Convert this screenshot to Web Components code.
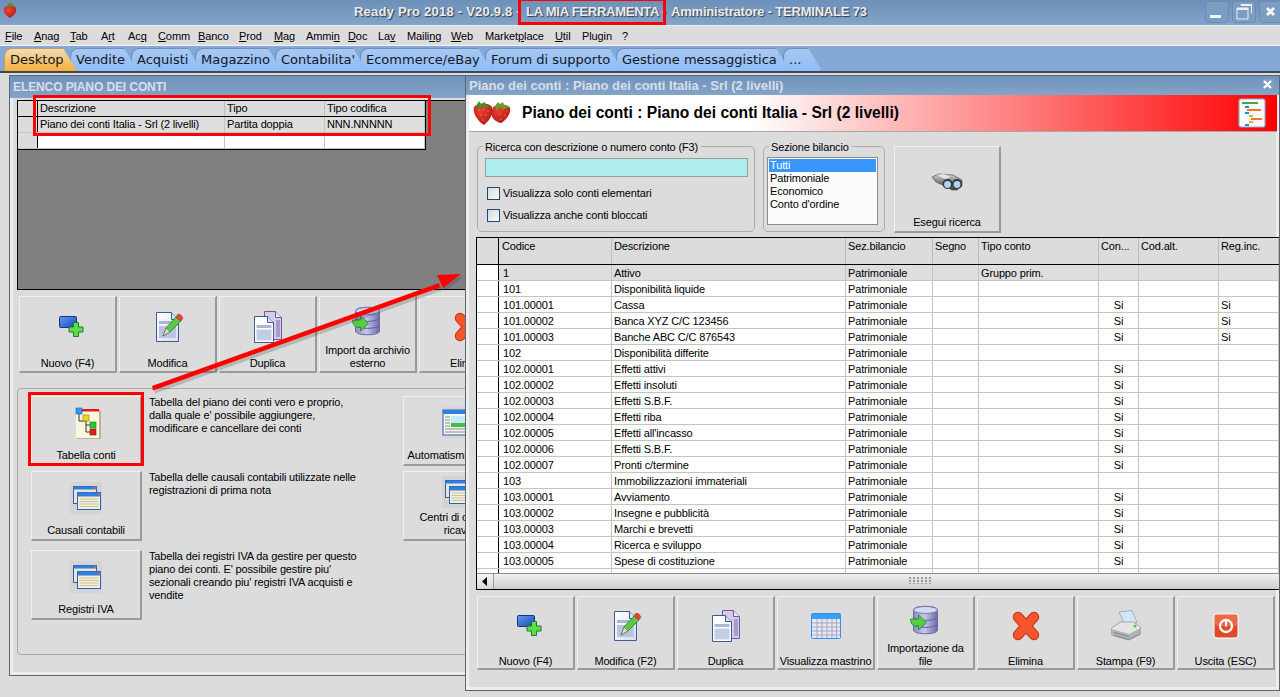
<!DOCTYPE html>
<html lang="it"><head><meta charset="utf-8"><title>Ready Pro</title>
<style>
html,body{margin:0;padding:0;height:697px;width:1280px;overflow:hidden;background:#dcdcdc}
body{display:flex;flex-direction:column;font:11px "Liberation Sans",sans-serif;color:#000;letter-spacing:-.15px}
</style></head><body>
<rp-titlebar></rp-titlebar>
<rp-menubar items="File:0|Anag:0|Tab:0|Art:1|Acq:2|Comm:0|Banco:0|Prod:0|Mag:0|Ammin:4|Doc:0|Lav:2|Mailing:5|Web:0|Marketplace:6|Util:0|Plugin:9|?:9"></rp-menubar>
<rp-tabs items="Desktop|Vendite|Acquisti|Magazzino|Contabilita'|Ecommerce/eBay|Forum di supporto|Gestione messaggistica|..."></rp-tabs>
<rp-desktop>
  <rp-window style="left:9px;top:2px;width:900px;height:601px" heading="ELENCO PIANO DEI CONTI" tall>
    <rp-left-content></rp-left-content>
  </rp-window>
  <rp-arrow style="left:0;top:0;width:480px;height:400px"></rp-arrow>
  <rp-window style="left:465px;top:2px;width:815px;height:616px" heading="Piano dei conti : Piano dei conti Italia - Srl (2 livelli)" closable>
    <rp-right-content></rp-right-content>
  </rp-window>
</rp-desktop>
<rp-callout style="left:518px;top:-2px;width:148px;height:27px"></rp-callout>
<rp-callout style="left:33px;top:95px;width:398px;height:41px"></rp-callout>
<rp-callout style="left:28px;top:392px;width:116px;height:74px"></rp-callout>
<script>
const I={};
I.new=`<defs><linearGradient id="a" x1="0" y1="0" x2="1" y2="1"><stop offset="0" stop-color="#5f9bf0"/><stop offset="1" stop-color="#1c46b8"/></linearGradient></defs>
<rect x="7.500" y="5.500" width="17" height="11" rx="1" fill="url(#a)" stroke="#17357f"/>
<path d="M21.500 11.500h5v4.500h4.500v5h-4.500v4.500h-5v-4.500h-4.500v-5h4.500z" fill="#5fdc4a" stroke="#1c7c24"/>`;
I.edit=`<defs><linearGradient id="a" x1="0" y1="0" x2="1" y2="1"><stop offset="0" stop-color="#fff"/><stop offset="1" stop-color="#d6dff0"/></linearGradient></defs>
<path d="M4.500 1.500h15l7 7v22h-22z" fill="url(#a)" stroke="#3f5b95"/><path d="M19.500 1.500v7h7" fill="#cfe2f8" stroke="#3f5b95"/>
<rect x="7" y="10" width="17" height="3" fill="#aab8d8"/><rect x="7" y="15" width="17" height="12" fill="#b8c4e2"/>
<path d="M11 25l3-8L24 6l5 4L18 21z" fill="#5cc84a" stroke="#2b7c2b" stroke-width=".8"/><path d="M11 25l3-8 4 4z" fill="#e9d9b8" stroke="#555" stroke-width=".5"/>
<path d="M24 6l2-3 3 1 2 3-2 3z" fill="#e8452c" stroke="#a52a1a" stroke-width=".5"/>`;
I.dup=`<path d="M12.500 .5h11l6 6v22h-17z" fill="#d7cbe8" stroke="#6a5a9c"/><path d="M23.500 .5v6h6" fill="#efe9f7" stroke="#6a5a9c"/><rect x="24" y="9" width="4" height="17" fill="#a999cc"/>
<path d="M2.500 5.500h13l6 6v20h-19z" fill="#fff" stroke="#3f5b95"/><path d="M15.500 5.500v6h6" fill="#cfe2f8" stroke="#3f5b95"/>
<rect x="4.500" y="14" width="15" height="3" fill="#aab8d8"/><rect x="4.500" y="18.500" width="15" height="11" fill="#c2cde6"/>`;
I.cal=`<rect x="1.500" y="3.500" width="29" height="25" rx="1" fill="#e8e6f2" stroke="#2b90f0"/><rect x="2" y="4" width="28" height="5" fill="#3ba0f4"/>
<path d="M2 13h28M2 17h28M2 21h28M2 25h28M7 9v19M12 9v19M17 9v19M22 9v19M26.500 9v19" stroke="#a9a7c4" fill="none"/>`;
I.db=`<defs><linearGradient id="a" x1="0" x2="1"><stop offset="0" stop-color="#8c8cc4"/><stop offset=".45" stop-color="#c6c6ec"/><stop offset="1" stop-color="#6c6ca8"/></linearGradient></defs>
<path d="M3.500 6c0-5 24-5 24 0v20c0 5-24 5-24 0z" fill="url(#a)" stroke="#6a6aa0"/><ellipse cx="15.500" cy="6" rx="12" ry="3.500" fill="#d7d7f4" stroke="#7a7ab0"/>
<path d="M3.500 13c2 4.500 22 4.500 24 0M3.500 20c2 4.500 22 4.500 24 0" fill="none" stroke="#5f5f98"/>
<path d="M.5 15h8v-4l8 7.500-8 7.500v-4h-3c-3 0-5-3-5-7z" fill="#55cc44" stroke="#23802a" stroke-width=".8"/>`;
I.del=`<path d="M8 7l16 18M24 7L8 25" fill="none" stroke="#c8361a" stroke-width="10.500" stroke-linecap="round"/><path d="M8 7l16 18M24 7L8 25" fill="none" stroke="#f4552c" stroke-width="8.500" stroke-linecap="round"/>`;
I.print=`<path d="M9 2l13-1.500 5 12L15 15z" fill="#cfe6fb" stroke="#8a9aa8" stroke-width=".7"/>
<path d="M1.500 18l9-6h13l7 5v7L19 30 1.500 25z" fill="#e4e6e6" stroke="#8a8f92" stroke-width=".7"/><path d="M1.500 19l17.500 5 11.500-6v6L19 30 1.500 25z" fill="#aeb4b6"/>
<path d="M4 25.500l15 4 11-5.500M4 22.500l15 4" stroke="#6e7578" fill="none" stroke-width=".7"/><circle cx="25" cy="16" r="1.500" fill="#4cc844"/>`;
I.power=`<rect x="4" y="4" width="24" height="24" rx="3" fill="#e04a28" stroke="#fff"/><rect x="5" y="5" width="22" height="11" rx="2" fill="#ec6a48"/>
<circle cx="16" cy="16" r="6" fill="none" stroke="#fff" stroke-width="2.300"/><rect x="15" y="10.500" width="2" height="6" fill="#fff"/>`;
I.list=`<rect x="0" y="0" width="32" height="32" fill="#d4d4d4"/><rect x="3.500" y="4.500" width="23" height="17" fill="#eae6d2" stroke="#2d5fb8"/><rect x="3.500" y="4.500" width="23" height="3" fill="#2f7fe0"/><circle cx="25" cy="6" r="1.200" fill="#f26030"/>
<rect x="7.500" y="10.500" width="23" height="17" fill="#f4efd8" stroke="#2d5fb8"/><rect x="7.500" y="10.500" width="23" height="4" fill="#2f7fe0"/><circle cx="29" cy="12.500" r="1.200" fill="#f26030"/>
<path d="M9.500 17h19M9.500 19.500h19M9.500 22h19M9.500 24.500h19" stroke="#c8c2a2"/>`;
I.auto=`<rect x="0" y="0" width="32" height="32" fill="#d6d6d6"/><rect x="1" y="3" width="30" height="25" fill="#f6f6ee" stroke="#2d5fb8"/><rect x="1" y="3" width="30" height="4" fill="#2f7fe0"/>
<rect x="9" y="9" width="21" height="7" fill="#c4ecf8"/><rect x="9" y="16" width="21" height="4" fill="#40c040"/><path d="M3 10h5M3 13h5M3 16h5M3 19h5M3 22h26M3 25h26" stroke="#888"/>`;
I.tree=`<rect x="7" y="3" width="24" height="29" fill="#b9b3a0"/><rect x="6" y="2" width="23" height="29" fill="#fbf6e0"/><rect x="11" y="2" width="18" height="2.500" fill="#e81818"/>
<path d="M9 7v7h7M16 14v11h6M16 18h6" fill="none" stroke="#333"/><rect x="6" y="1" width="6" height="6" fill="#2f9bee" stroke="#1560a8" stroke-width=".6"/>
<rect x="13" y="8" width="6" height="6" fill="#f0d820" stroke="#907c10" stroke-width=".6"/><rect x="20" y="15" width="6" height="6" fill="#22d024" stroke="#118018" stroke-width=".6"/><rect x="20" y="22" width="6" height="6" fill="#e02020" stroke="#901010" stroke-width=".6"/>`;
I.bino=`<defs><linearGradient id="a" x1="0" y1="0" x2="0" y2="1"><stop offset="0" stop-color="#d4d4d4"/><stop offset=".5" stop-color="#7c8084"/><stop offset="1" stop-color="#3c3f43"/></linearGradient></defs>
<path d="M1 11l7-3 14 1 9 5v6l-5 4-5 0-7-4-9-4z" fill="url(#a)" stroke="#404040" stroke-width=".6"/><path d="M6 9l7-1 7 3-6 2z" fill="#e4e4e4"/>
<circle cx="16.500" cy="18" r="5" fill="#34383c"/><circle cx="16.500" cy="18.500" r="3.400" fill="#b4d2f6"/><circle cx="26" cy="18" r="5" fill="#34383c"/><circle cx="26" cy="18.500" r="3.400" fill="#b4d2f6"/>`;
I.hdr=`<rect x="1" y="1" width="26" height="28" rx="2" fill="#f8fbfc" stroke="#8fb0c8" stroke-width="1.200"/><rect x="4" y="4" width="16" height="2" fill="#46a836"/><rect x="7" y="8" width="4" height="2" fill="#1a88e0"/><rect x="9" y="11" width="14" height="2" fill="#f47828"/><rect x="7" y="14" width="4" height="2" fill="#1a88e0"/><rect x="11" y="17" width="4" height="2" fill="#eab020"/><rect x="13" y="20" width="11" height="2" fill="#f47828"/><rect x="11" y="23" width="4" height="2" fill="#eab020"/><rect x="7" y="26" width="4" height="2" fill="#1a88e0"/>`;
const seeds=(a)=>a.map(([x,y])=>`<circle cx="${x}" cy="${y}" r=".6" fill="#f0b090"/>`).join('');
I.berries=`<defs><radialGradient id="r" cx=".4" cy=".35" r=".8"><stop offset="0" stop-color="#e8402c"/><stop offset=".7" stop-color="#c0201c"/><stop offset="1" stop-color="#8a1414"/></radialGradient></defs>
<path d="M20 6c6-4 15-3 17 1 1 6-4 12-9 15-6-1-10-6-10-10z" fill="url(#r)"/>
<path d="M1 6c3-4 14-5 18 0 2 7-3 14-8 18C6 21-1 13 1 6z" fill="url(#r)"/>
${seeds([[6,9],[11,8],[15,10],[8,14],[13,14],[10,19],[24,8],[30,8],[34,10],[27,13],[32,14],[28,18]])}
<path d="M3 5l3-5 2 3 4-2 1 3 5 1-5 2-4-1-4 2z" fill="#4e8a2c"/><path d="M22 5l3-4 2 2 3-2 1 3 6 2-6 2-4-1-4 2z" fill="#6f9a30"/>`;
I.app=`<defs><radialGradient id="r" cx=".4" cy=".35" r=".8"><stop offset="0" stop-color="#ee4a30"/><stop offset=".7" stop-color="#c42018"/><stop offset="1" stop-color="#901410"/></radialGradient></defs>
<path d="M1 7c2-3 10-3 12 0 1 5-3 8-6 10C4 15 0 12 1 7z" fill="url(#r)"/><path d="M4 5l1-3 2 1 2-2 1 3 3 1-3 1-3-1-3 1z" fill="#5a8a30"/>`;
const def=(n,c)=>customElements.define(n,c);
class Base extends HTMLElement{
  render(html){if(!this.shadowRoot)this.attachShadow({mode:'open'});this.shadowRoot.innerHTML=html}
}
def('rp-icon',class extends Base{connectedCallback(){const s=+(this.getAttribute('size')||32),n=this.getAttribute('name'),vb=this.getAttribute('vb')||'0 0 32 32';
  this.render(`<style>:host{display:block;width:${this.getAttribute('w')||s}px;height:${this.getAttribute('h')||s}px;flex:none}svg{display:block;width:100%;height:100%;overflow:visible}</style><svg viewBox="${vb}">${I[n]}</svg>`)}});
def('rp-titlebar',class extends Base{connectedCallback(){this.render(`<style>
:host{display:flex;flex:none;height:25px;border-bottom:1px solid #e8eef4;align-items:center;position:relative;background:linear-gradient(#6c90b8,#7c9ec4 70%,#82a4c8);font:bold 13px "Liberation Sans",sans-serif;color:#ececec}
.ic{position:absolute;left:3px;top:1px}
.t{display:flex;position:absolute;left:354px;top:4px;white-space:pre;text-shadow:1px 1px 1px #2c3c50}
.t span{display:block;flex:none}
.b{position:absolute;top:1px;width:22px;height:20px;border:1px solid #6a8cb0;border-radius:4px;background:#7c9dc2}
svg{position:absolute;left:0;top:0}
</style><rp-icon class="ic" name="app" size="18" vb="0 0 14 18" w="14" h="18"></rp-icon>
<div class="t"><span style="width:172px;letter-spacing:.22px">Ready Pro 2018 - V20.9.8 -</span><span style="width:145px;letter-spacing:-.25px">LA MIA FERRAMENTA -</span><span style="letter-spacing:-.2px">Amministratore - TERMINALE 73</span></div>
<div class="b" style="left:1205px"><svg width="22" height="20"><rect x="4" y="13" width="11" height="3" fill="#f4f4f4"/></svg></div>
<div class="b" style="left:1232px"><svg width="22" height="20"><path d="M7.500 2.500h11v9M4 6h11v11H4z" fill="none" stroke="#f0f0f0"/><path d="M4 6h11v2H4zM8 2h11v2H8z" fill="#f0f0f0"/></svg></div>
<div class="b" style="left:1259px;width:24px"><svg width="22" height="20"><path d="M7 6l7 7M14 6l-7 7" stroke="#f4f4f4" stroke-width="3"/></svg></div>`)}});
def('rp-menubar',class extends Base{connectedCallback(){const pos=[5,34,70,101,128,158,198,239,274,306,348,378,407,451,485,555,582,622];
  const it=this.getAttribute('items').split('|').map((s,i)=>{const [t,u]=[s.slice(0,s.lastIndexOf(':')),+s.slice(s.lastIndexOf(':')+1)];
    const h=t.length>u?t.slice(0,u)+'<u>'+t[u]+'</u>'+t.slice(u+1):t;
    const next=pos[i+1]||660;return `<span style="width:${next-pos[i]}px">${h}</span>`}).join('');
  this.render(`<style>:host{display:flex;flex:none;height:19px;padding-left:5px;align-items:center;background:#dcdcdc;border-bottom:1px solid #f4f4f4;font:11px "Liberation Sans",sans-serif;letter-spacing:-.1px}span{display:block;flex:none;white-space:pre}</style>${it}`)}});
def('rp-tabs',class extends Base{connectedCallback(){const w=[66,61,64,80,85,125,131,167,32];
  const it=this.getAttribute('items').split('|').map((t,i)=>`<div class="tab${i?'':' on'}" style="width:${w[i]}px;z-index:${20-i}"><i></i><span>${t}</span></div>`).join('');
  this.render(`<style>
:host{display:flex;flex:none;height:25px;padding-left:4px;align-items:flex-end;background:#84a8d8;border-bottom:2px solid #3c4854;box-sizing:content-box;font:13px "DejaVu Sans",sans-serif;letter-spacing:0;color:#101828;box-shadow:0 1px 0 #b0b0b0}
.tab{position:relative;height:23px;flex:none;box-sizing:border-box}
.tab span{position:relative;display:block;padding:4px 0 0 6px;white-space:pre}
.tab i{position:absolute;left:0;top:0;bottom:0;right:-7px;background:linear-gradient(#a8c8f0,#90bcf8);border:1px solid #6a90c4;border-bottom:0;border-radius:8px 14px 0 0;clip-path:polygon(0 0,calc(100% - 14px) 0,100% 100%,0 100%)}
.on i{background:linear-gradient(#eedcc0,#f4c470 50%,#f8b040);border-color:#d09a50;right:-7px}
</style>${it}`)}});
def('rp-desktop',class extends Base{connectedCallback(){this.render(`<style>:host{display:block;position:relative;flex:1;min-height:0;background:#dcdcdc;overflow:hidden}</style><slot></slot>`)}});
def('rp-window',class extends Base{connectedCallback(){const tall=this.hasAttribute('tall');
  this.render(`<style>
:host{display:flex;flex-direction:column;position:absolute;box-sizing:border-box;border:1px solid #5c6670;background:#dcdcdc;overflow:hidden;box-shadow:inset 0 0 0 3px #eeeeee}
.h{flex:none;height:${tall?22:19}px;margin:0;padding-left:3px;background:linear-gradient(#6e92bc,#84a4c8);font:bold ${tall?12:13}px/${tall?22:20}px "Liberation Sans",sans-serif;letter-spacing:${tall?-.1:0}px;color:#d8dfe8;position:relative;white-space:pre}
.x{position:absolute;right:5px;top:3px;width:12px;height:12px;background:#7e9ec4}
svg{display:block}
.b{flex:1;min-height:0;display:flex;flex-direction:column}
</style><div class="h">${this.getAttribute('heading')}${this.hasAttribute('closable')?'<div class="x"><svg width="12" height="12"><path d="M2 2l7 7M9 2l-7 7" stroke="#fff" stroke-width="2.200"/></svg></div>':''}</div><div class="b"><slot></slot></div>`)}});
def('rp-button',class extends Base{connectedCallback(){const ic=this.getAttribute('icon');
  this.render(`<style>
:host{display:flex;flex-direction:column;box-sizing:border-box;width:98px;height:74px;flex:none;border:1px solid;border-color:#f0f0f0 #9a9a9a #9a9a9a #f0f0f0;border-width:1px 2px 2px 1px;background:#dcdcdc;font:11px/13px "Liberation Sans",sans-serif;color:#000;text-align:center}
.i{flex:1;min-height:0;display:flex;align-items:center;justify-content:center}
.l{flex:none;padding:0 0 var(--lb,2px);white-space:pre-line}
</style><div class="i"><rp-icon name="${ic}"></rp-icon></div><div class="l">${this.getAttribute('label').replace('\\n','\n')}</div>`)}});
def('rp-group',class extends Base{connectedCallback(){this.render(`<style>
:host{display:block;box-sizing:border-box;position:relative;border:1px solid #ababab;border-radius:5px;height:86px}
.t{position:absolute;left:var(--lg,5px);top:-6px;background:#dcdcdc;padding:0 3px 0 2px;font:11px/13px "Liberation Sans",sans-serif}
</style><div class="t">${this.getAttribute('legend')||''}</div><slot></slot>`)}});
def('rp-check',class extends Base{connectedCallback(){this.render(`<style>
:host{display:flex;align-items:center;gap:3px;height:14px;font:11px/13px "Liberation Sans",sans-serif}
b{display:block;width:11px;height:11px;border:1px solid #1c4a78;background:linear-gradient(135deg,#d8d8d8,#fbfbfb);flex:none}
</style><b></b><span><slot></slot></span>`)}});
def('rp-listbox',class extends Base{connectedCallback(){const o=this.getAttribute('items').split('|').map((t,i)=>`<div class="${i?'':'s'}">${t}</div>`).join('');
  this.render(`<style>
:host{display:block;box-sizing:border-box;border:1px solid #8a8a8a;background:#fcfcfc;padding:1px;font:11px/13px "Liberation Sans",sans-serif;height:68px}
div{padding-left:1px;height:13px;white-space:pre}.s{background:#3996fd;color:#fff}
</style>${o}`)}});
def('rp-grid',class extends Base{connectedCallback(){
  const cols=this.getAttribute('cols').split(',').map(Number),center=(this.getAttribute('center')||'').split(',').map(Number);
  const lines=this.textContent.split('\n').map(s=>s.trim()).filter(Boolean);this.textContent='';
  const head=lines[0].split('|'),rows=lines.slice(1).map(l=>l.split('|'));
  const hh=this.getAttribute('hh')||16;const grey=+(this.getAttribute('grey')||1),short=this.hasAttribute('short');
  const cell=(t,i,c)=>`<div class="${c}${center.includes(i)?' ctr':''}${i==1?' first':''}" style="width:${cols[i]}px">${t}</div>`;
  const r=rows.map((x,n)=>`<div class="r${n<grey?' g':''}">${cell('',0,'rh')}${x.map((t,i)=>cell(t,i+1,'c')).join('')}</div>`).join('');
  this.render(`<style>
:host{display:flex;flex-direction:column;box-sizing:border-box;border:1px solid #000;background:${this.getAttribute('bg')||'#fff'};font:11px/15px "Liberation Sans",sans-serif;overflow:hidden}
.tbl{flex:1;min-height:0;overflow:hidden}
.in{display:inline-block;vertical-align:top;${short?'border:solid #000;border-width:0 1px 1px 0':''}}
.hd,.r{display:flex}
.hd{height:${hh}px;background:#dcdcdc;border-bottom:1px solid #000;box-sizing:content-box}
.hd div{box-sizing:border-box;padding-left:2px;border-right:1px solid #bcbcbc;flex:none;white-space:pre;overflow:hidden;line-height:${short?15:16}px}
.hd .rh{border-right:1px solid #000}
.r{height:16px;box-sizing:border-box;border-bottom:1px solid #c4c4c4;background:#fff}
.r.g{background:#dedede}
.r div{box-sizing:border-box;flex:none;padding-left:2px;border-right:1px solid #c4c4c4;white-space:pre;overflow:hidden;line-height:${short?15:17}px}
.r .rh{background:${short?'#dcdcdc':'#fff'};border-right:1px solid #000}
.r div.ctr{text-align:center;padding-left:0}
${short?'':'.hd .first{padding-left:3px}.r .first{padding-left:4px}'}
.sb{flex:none;height:15px;display:flex;border-top:1px solid #8c8c8c;background:linear-gradient(#f0f0f0,#cfcfcf);position:relative}
.sb b{display:block;width:16px;border-right:1px solid #9a9a9a;background:linear-gradient(#f4f4f4,#d8d8d8)}
.sb svg{display:block;margin:3px 0 0 4px}
.gr{position:absolute;left:432px;top:3px;width:22px;height:7px;background:radial-gradient(circle at 1px 1px,#9a9a9a 0 .7px,transparent 1px) 0 0/4px 3px}
</style><div class="tbl"><div class="in"><div class="hd">${cell('',0,'rh')}${head.map((t,i)=>cell(t,i+1,'')).join('')}</div>${r}</div></div>${this.hasAttribute('scroll')?'<div class="sb"><b><svg width="8" height="9"><path d="M6 0v9L1 4.500z" fill="#000"/></svg></b><div class="gr"></div></div>':''}`);
}});
def('rp-left-content',class extends Base{connectedCallback(){const row=(cls,ic,lab,txt,ic2,lab2)=>`<div class="row ${cls}"><rp-button class="big" icon="${ic}" label="${lab}"></rp-button><p>${txt}</p><rp-button class="big" icon="${ic2}" label="${lab2}"></rp-button></div>`;
  this.render(`<style>
:host{display:flex;flex-direction:column;padding:2px 0 0 7px;font:11px/13px "Liberation Sans",sans-serif}
rp-grid{height:190px}
.bar{display:flex;gap:2px;margin:6px 0 0 2px;--lb:1px}
.bar rp-button{height:77px}
.grp{margin-top:15px;height:267px;border:1px solid #aaa;border-radius:4px;box-sizing:border-box;padding:7px 0 0 13px}
.row{display:flex}
.row.r2{margin-top:5px}.row.r3{margin-top:9px}
.big{width:111px;height:70px}
p{margin:0;padding:0 0 0 7px;width:261px;box-sizing:border-box;flex:none}
</style>
<rp-grid bg="#808080" short hh="15" cols="20,187,100,100">Descrizione|Tipo|Tipo codifica
Piano dei conti Italia - Srl (2 livelli)|Partita doppia|NNN.NNNNN
||</rp-grid>
<div class="bar"><rp-button icon="new" label="Nuovo (F4)"></rp-button><rp-button icon="edit" label="Modifica"></rp-button><rp-button icon="dup" label="Duplica"></rp-button><rp-button icon="db" label="Import da archivio\\nesterno"></rp-button><rp-button icon="del" label="Elimina"></rp-button></div>
<div class="grp">
${row('r1','tree','Tabella conti','Tabella del piano dei conti vero e proprio,<br>dalla quale e\' possibile aggiungere,<br>modificare e cancellare dei conti','auto','Automatismi contabili')}
${row('r2','list','Causali contabili','Tabella delle causali contabili utilizzate nelle<br>registrazioni di prima nota','list','Centri di costo e\\nricavo')}
<div class="row r3"><rp-button class="big" icon="list" label="Registri IVA"></rp-button><p>Tabella dei registri IVA da gestire per questo<br>piano dei conti. E' possibile gestire piu'<br>sezionali creando piu' registri IVA acquisti e<br>vendite</p></div>
</div>`)}});
def('rp-right-content',class extends Base{connectedCallback(){
  const P='Patrimoniale',rows=[['1','Attivo',P,'','Gruppo prim.','','',''],['101','Disponibilità liquide',P],['101.00001','Cassa',P,'','','Si','','Si'],['101.00002','Banca XYZ C/C 123456',P,'','','Si','','Si'],['101.00003','Banche ABC C/C 876543',P,'','','Si','','Si'],['102','Disponibilità differite',P],['102.00001','Effetti attivi',P,'','','Si'],['102.00002','Effetti insoluti',P,'','','Si'],['102.00003','Effetti S.B.F.',P,'','','Si'],['102.00004','Effetti riba',P,'','','Si'],['102.00005',"Effetti all'incasso",P,'','','Si'],['102.00006','Effetti S.B.F.',P,'','','Si'],['102.00007','Pronti c/termine',P,'','','Si'],['103','Immobilizzazioni immateriali',P],['103.00001','Avviamento',P,'','','Si'],['103.00002','Insegne e pubblicità',P,'','','Si'],['103.00003','Marchi e brevetti',P,'','','Si'],['103.00004','Ricerca e sviluppo',P,'','','Si'],['103.00005','Spese di costituzione',P,'','','Si'],['103.00006','Spese di ampliamento',P,'','','Si']];
  const data=['Codice|Descrizione|Sez.bilancio|Segno|Tipo conto|Con...|Cod.alt.|Reg.inc.'].concat(rows.map(r=>{const a=r.slice();while(a.length<8)a.push('');return a.join('|')})).join('\n');
  this.render(`<style>
:host{display:flex;flex-direction:column;flex:1;min-height:0;font:11px/13px "Liberation Sans",sans-serif}
.top{flex:none;height:36px;margin:0 2px 0 3px;display:flex;align-items:center;justify-content:space-between;background:linear-gradient(90deg,#fff 35%,#f00 100%);border-bottom:1px solid #a8a8a8}
.top b{font:bold 15.600px "Liberation Sans",sans-serif;letter-spacing:0;margin-left:11px;flex:1}
.s{flex:none;display:flex;margin:14px 0 0 11px;gap:8px}
.g1{width:278px;padding:11px 0 0 7px;box-sizing:border-box}
.inp{width:263px;height:19px;background:#aeeeee;border:1px solid #9a9a9a;box-sizing:border-box;margin-bottom:9px}
rp-check{margin:0 0 8px 2px}
.g2{width:122px;padding:10px 0 0 4px;box-sizing:border-box;--lg:5px}
.g2 rp-listbox{width:111px;margin-left:-1px}
.go{width:107px;height:87px;margin-left:1px}
.gw{flex:none;height:353px;margin:4px 0 0 10px;width:804px}
.bar{flex:none;display:flex;gap:2px;margin:6px 0 0 11px;--lb:0px}
.bar rp-button{width:98px}
.bot{flex:1}
</style>
<div class="top"><rp-icon name="berries" size="38" vb="0 0 38 24" w="38" h="24" style="margin-left:4px"></rp-icon><b>Piano dei conti : Piano dei conti Italia - Srl (2 livelli)</b><rp-icon name="hdr" size="28" vb="0 0 28 30" w="28" h="30" style="margin-right:11px"></rp-icon></div>
<div class="s">
<rp-group class="g1" legend="Ricerca con descrizione o numero conto (F3)"><div class="inp"></div><rp-check>Visualizza solo conti elementari</rp-check><rp-check>Visualizza anche conti bloccati</rp-check></rp-group>
<rp-group class="g2" legend="Sezione bilancio"><rp-listbox items="Tutti|Patrimoniale|Economico|Conto d'ordine"></rp-listbox></rp-group>
<rp-button class="go" icon="bino" label="Esegui ricerca"></rp-button>
</div>
<rp-grid class="gw" scroll hh="26" cols="22,113,234,87,46,120,40,80,60" center="6">${data}</rp-grid>
<div class="bar"><rp-button icon="new" label="Nuovo (F4)"></rp-button><rp-button icon="edit" label="Modifica (F2)"></rp-button><rp-button icon="dup" label="Duplica"></rp-button><rp-button icon="cal" label="Visualizza mastrino"></rp-button><rp-button icon="db" label="Importazione da\\nfile"></rp-button><rp-button icon="del" label="Elimina"></rp-button><rp-button icon="print" label="Stampa (F9)"></rp-button><rp-button icon="power" label="Uscita (ESC)"></rp-button></div>
<div class="bot"></div>`)}});
def('rp-arrow',class extends Base{connectedCallback(){this.render(`<style>:host{display:block;position:absolute;pointer-events:none}svg{display:block;overflow:visible}</style>
<svg width="480" height="400"><g transform="translate(2 3)" opacity=".25" fill="#444"><path d="M152 313l287-103 1 4.500-287 103zM461 201l-24 1 6 13z"/></g><path d="M152 313l287-103 1 4.500-287 103z" fill="#f00"/><path d="M461 201l-24 1 6 13z" fill="#f00"/></svg>`)}});
def('rp-callout',class extends Base{connectedCallback(){this.render(`<style>:host{display:block;position:absolute;box-sizing:border-box;border:3px solid #f00;pointer-events:none;z-index:50}</style>`)}});
</script>
</body></html>
